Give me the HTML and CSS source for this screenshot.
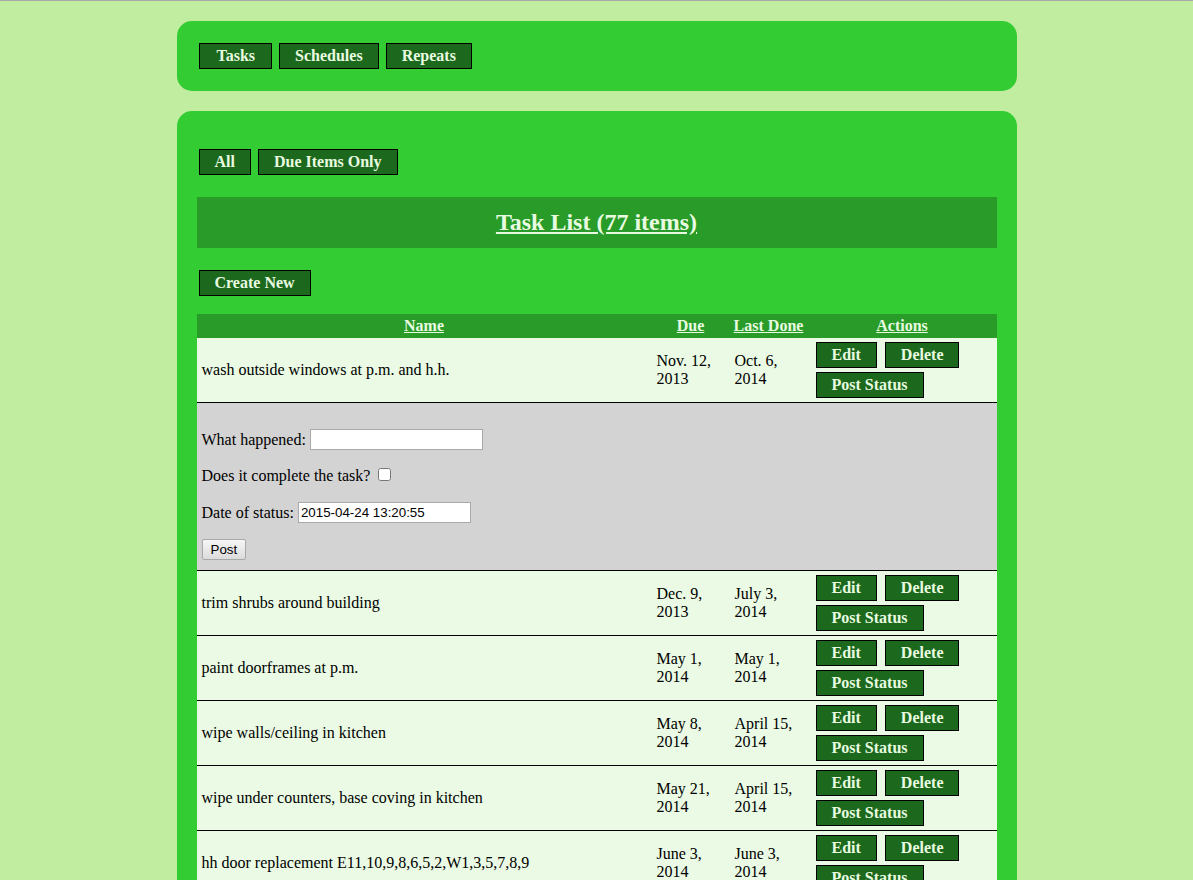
FILE: index.html
```html
<!DOCTYPE html>
<html>
<head>
<meta charset="utf-8">
<title>Task List</title>
<link rel="stylesheet" href="styles.css">
</head>
<body>
<div class="panel nav-panel">
  <nav class="btn-row">
    <a class="btn" href="#">Tasks</a>
    <a class="btn" href="#">Schedules</a>
    <a class="btn" href="#">Repeats</a>
  </nav>
</div>
<div class="panel main-panel">
  <div class="btn-row filter-row">
    <a class="btn" href="#">All</a>
    <a class="btn" href="#">Due Items Only</a>
  </div>
  <h2 class="title-bar"><a href="#">Task List (77 items)</a></h2>
  <div class="btn-row create-row">
    <a class="btn" href="#">Create New</a>
  </div>
  <table class="tasks">
    <colgroup>
      <col class="c-name"><col class="c-due"><col class="c-last"><col class="c-act">
    </colgroup>
    <thead>
      <tr><th><a href="#">Name</a></th><th><a href="#">Due</a></th><th><a href="#">Last Done</a></th><th><a href="#">Actions</a></th></tr>
    </thead>
    <tbody>
      <tr>
        <td>wash outside windows at p.m. and h.h.</td><td>Nov. 12, 2013</td><td>Oct. 6, 2014</td>
        <td class="actions"><a class="btn" href="#">Edit</a><a class="btn" href="#">Delete</a><a class="btn" href="#">Post Status</a></td>
      </tr>
      <tr class="status-row">
        <td colspan="4">
          <form class="status-form">
            <p><span>What happened:</span><input type="text" class="txt"></p>
            <p><span>Does it complete the task?</span><input type="checkbox" class="chk"></p>
            <p><span>Date of status:</span><input type="text" class="txt" value="2015-04-24 13:20:55"></p>
            <p><button type="button" class="post">Post</button></p>
          </form>
        </td>
      </tr>
      <tr>
        <td>trim shrubs around building</td><td>Dec. 9, 2013</td><td>July 3, 2014</td>
        <td class="actions"><a class="btn" href="#">Edit</a><a class="btn" href="#">Delete</a><a class="btn" href="#">Post Status</a></td>
      </tr>
      <tr>
        <td>paint doorframes at p.m.</td><td>May 1, 2014</td><td>May 1, 2014</td>
        <td class="actions"><a class="btn" href="#">Edit</a><a class="btn" href="#">Delete</a><a class="btn" href="#">Post Status</a></td>
      </tr>
      <tr>
        <td>wipe walls/ceiling in kitchen</td><td>May 8, 2014</td><td>April 15, 2014</td>
        <td class="actions"><a class="btn" href="#">Edit</a><a class="btn" href="#">Delete</a><a class="btn" href="#">Post Status</a></td>
      </tr>
      <tr>
        <td>wipe under counters, base coving in kitchen</td><td>May 21, 2014</td><td>April 15, 2014</td>
        <td class="actions"><a class="btn" href="#">Edit</a><a class="btn" href="#">Delete</a><a class="btn" href="#">Post Status</a></td>
      </tr>
      <tr>
        <td>hh door replacement E11,10,9,8,6,5,2,W1,3,5,7,8,9</td><td>June 3, 2014</td><td>June 3, 2014</td>
        <td class="actions"><a class="btn" href="#">Edit</a><a class="btn" href="#">Delete</a><a class="btn" href="#">Post Status</a></td>
      </tr>
      <tr>
        <td>clean gutters at p.m.</td><td>June 10, 2014</td><td>June 10, 2014</td>
        <td class="actions"><a class="btn" href="#">Edit</a><a class="btn" href="#">Delete</a><a class="btn" href="#">Post Status</a></td>
      </tr>
    </tbody>
  </table>
</div>
</body>
</html>
```
FILE: styles.css
```css
html, body {
  margin: 0;
  padding: 0;
}
body {
  background: #c0eda0;
  border-top: 1px solid #a8a8a8;
  font-family: "Liberation Serif", "Times New Roman", serif;
  font-size: 16px;
  color: #000;
}
.panel {
  width: 800px;
  margin: 20px auto;
  padding: 20px;
  background: #33cc33;
  border-radius: 15px;
}
.btn-row {
  display: flex;
  gap: 3px;
}
.btn {
  display: inline-block;
  margin: 2px;
  padding: 3px 15px;
  line-height: 18px;
  background: #1c681c;
  border: 1px solid #000;
  color: #e8fbe0;
  font-weight: bold;
  font-size: 16px;
  text-decoration: none;
  white-space: nowrap;
}
.nav-panel .btn:first-child {
  padding: 3px 16px 3px 17px;
}
.filter-row {
  margin-top: 16px;
}
.title-bar {
  margin: 20px 0 0;
  height: 51px;
  display: flex;
  align-items: center;
  justify-content: center;
  background: #289b28;
  font-size: 24px;
  font-weight: bold;
}
.title-bar a {
  color: #e8fbe0;
}
.create-row {
  margin-top: 20px;
}
.tasks {
  margin-top: 16px;
  width: 800px;
  table-layout: fixed;
  border-collapse: collapse;
  border-spacing: 0;
}
.c-name { width: 455px; }
.c-due { width: 78px; }
.c-last { width: 78px; }
.c-act { width: 189px; }
.tasks th {
  background: #289b28;
  padding: 3px 0;
  line-height: 18px;
  font-weight: bold;
  text-align: center;
}
.tasks th a {
  color: #e8fbe0;
}
.tasks td {
  background: #eafae4;
  border-bottom: 1px solid #000;
  padding: 2px 5px;
  line-height: 18px;
  vertical-align: middle;
}
.tasks td.actions {
  padding: 2px 3px 2px 4px;
  font-size: 0;
}
.actions .btn {
  margin: 2px 4px;
}
.status-row td {
  background: #d3d3d3;
  padding: 26px 5px 10px;
}
.status-form p {
  display: flex;
  align-items: center;
  gap: 4px;
  height: 21px;
  margin: 0 0 15.5px;
}
.status-form p:last-child {
  margin-bottom: 0;
}
.txt {
  width: 173px;
  height: 21px;
  box-sizing: border-box;
  margin: 0;
  border: 1px solid #a9a9a9;
  padding: 1px 2px;
  font-family: "Liberation Sans", Arial, sans-serif;
  font-size: 13.33px;
  background: #fff;
}
.chk {
  width: 13px;
  height: 13px;
  margin: -4px 0 0 4px;
}
.post {
  height: 21px;
  margin: 0;
  padding: 1px 8px;
  font-family: "Liberation Sans", Arial, sans-serif;
  font-size: 13.33px;
  border: 1px solid #a9a9a9;
  border-radius: 2px;
  background: linear-gradient(#f6f6f6, #dcdcdc);
  color: #000;
}
```
